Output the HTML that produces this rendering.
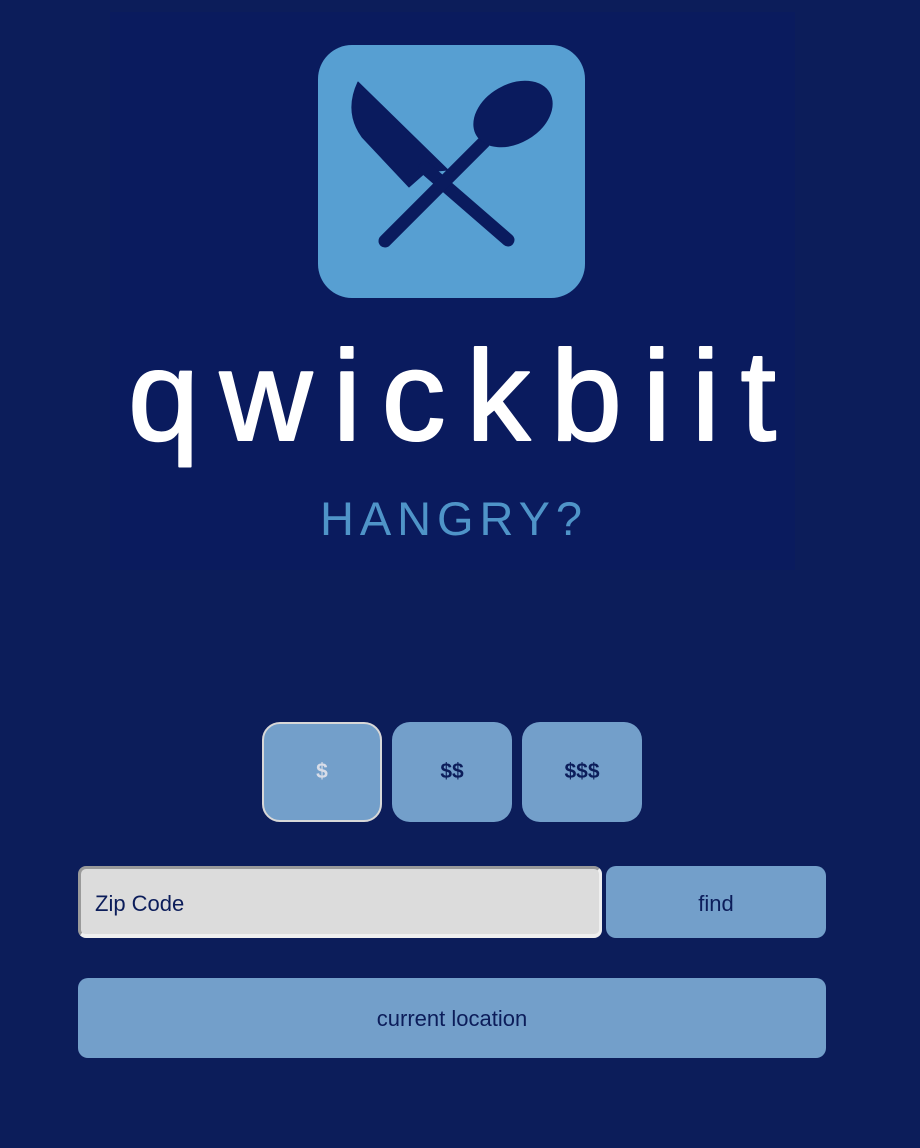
<!DOCTYPE html>
<html><head><meta charset="utf-8"><style>
html,body{margin:0;padding:0;background:#0c1d5a;width:920px;height:1148px;overflow:hidden;font-family:"Liberation Sans",sans-serif}
.logo{position:absolute;left:110px;top:12px;width:685px;height:558px;background:#0a1b5e}
.pb{position:absolute;top:722px;width:120px;height:100px;border-radius:18px;background:#739fca;box-sizing:border-box;color:#0c1d5a;font-size:21px;font-weight:bold;text-align:center;line-height:100px}
.zip{position:absolute;left:78px;top:866px;width:524px;height:72px;box-sizing:border-box;border-radius:8px;background:#dcdcdc;border-top:3px solid #9a9a9a;border-left:3px solid #9a9a9a;border-right:3px solid #efefef;border-bottom:4px solid #efefef;color:#0c1d5a;font-size:22px;line-height:70px;padding-left:14px}
.find{position:absolute;left:606px;top:866px;width:220px;height:72px;border-radius:10px;background:#739fca;color:#0c1d5a;font-size:22px;text-align:center;line-height:76px}
.cur{position:absolute;left:78px;top:978px;width:748px;height:80px;border-radius:10px;background:#739fca;color:#0c1d5a;font-size:22px;text-align:center;line-height:82px}
</style></head><body>
<div class="logo"></div>
<svg style="position:absolute;left:0;top:0" width="920" height="600">
<rect x="318" y="45" width="267" height="253" rx="34" fill="#579fd2"/>
<g fill="#0a1b5e" stroke="#0a1b5e" stroke-linecap="round" stroke-linejoin="round">
<path d="M358 82 L448 170 L426 172 L409 187 L362 137 Q344 112 358 82 Z" stroke-width="1"/>
<line x1="425" y1="168" x2="508" y2="240" stroke-width="13" fill="none"/>
<line x1="385" y1="241" x2="484" y2="142" stroke-width="13" fill="none"/>
<ellipse cx="513" cy="114" rx="42" ry="29" transform="rotate(-30 513 114)" stroke-width="1"/>
</g>
<text x="128" y="440" font-size="128" fill="#fff" stroke="#fff" stroke-width="2" stroke-linejoin="round" textLength="648" lengthAdjust="spacing" font-family="Liberation Sans">qwickbiit</text>
<text x="320" y="535" font-size="47" fill="#4f94c8" textLength="262" lengthAdjust="spacing" font-family="Liberation Sans">HANGRY?</text>
</svg>
<div class="pb" style="left:262px;border:2px solid #d8d8d8;color:#d8dde8;line-height:96px">$</div>
<div class="pb" style="left:392px">$$</div>
<div class="pb" style="left:522px">$$$</div>
<div class="zip">Zip Code</div>
<div class="find">find</div>
<div class="cur">current location</div>
</body></html>
